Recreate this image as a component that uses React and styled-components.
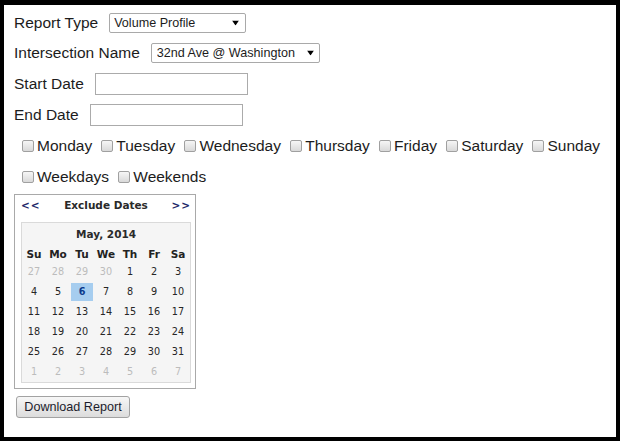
import React from 'react';
import styled, { createGlobalStyle } from 'styled-components';

const Global = createGlobalStyle`
  html, body { margin: 0; padding: 0; background: #fff; }
  body { font-family: "Liberation Sans", Arial, sans-serif; }
`;

const Frame = styled.div`
  width: 620px;
  height: 441px;
  box-sizing: border-box;
  border-style: solid;
  border-color: #000;
  border-width: 5px 4px 4px 4px;
  padding: 3px 0 0 10px;
  display: flex;
  flex-direction: column;
  align-items: flex-start;
  color: #1c1c1c;
  font-size: 15.5px;
`;

const FormRow = styled.div`
  display: flex;
  align-items: center;
  gap: 11px;
  height: ${(p) => p.$h}px;
`;

const SelectWrap = styled.span`
  position: relative;
  display: inline-flex;
`;

const Select = styled.select`
  appearance: none;
  -webkit-appearance: none;
  box-sizing: border-box;
  width: ${(p) => p.$w}px;
  height: 20px;
  margin: 0;
  padding: 0 0 0 ${(p) => p.$pl}px;
  border: 1px solid #a9a9a9;
  border-radius: 2px;
  background: #fff;
  font-family: "Liberation Sans", Arial, sans-serif;
  font-size: 12.6px;
  color: #1c1c1c;
  outline: none;
`;

const Arrow = styled.svg`
  position: absolute;
  right: ${(p) => p.$r}px;
  top: 50%;
  transform: translateY(-50%);
  pointer-events: none;
`;

const TextInput = styled.input`
  box-sizing: border-box;
  width: 153px;
  height: 22px;
  margin: 0;
  padding: 0 3px;
  border: 1px solid #ababab;
  background: #fff;
  outline: none;
`;

const CheckRow = styled.div`
  display: flex;
  align-items: center;
  gap: 9.2px;
  padding-left: 8px;
  height: 31px;
`;

const CheckItem = styled.label`
  display: inline-flex;
  align-items: center;
  white-space: nowrap;
`;

const Check = styled.input`
  appearance: none;
  -webkit-appearance: none;
  box-sizing: border-box;
  width: 12px;
  height: 12px;
  margin: 0 3px 0 0;
  border: 1px solid #a0a0a0;
  border-radius: 2px;
  background: linear-gradient(#f6f6f6, #d9d9d9);
`;

const Calendar = styled.div`
  margin-top: 2px;
  width: 182px;
  box-sizing: border-box;
  border: 1px solid #a9a9a9;
  padding: 0 4px 5px 6px;
  font-family: "DejaVu Sans", Verdana, sans-serif;
`;

const CalHeader = styled.div`
  display: flex;
  justify-content: space-between;
  align-items: center;
  height: 19px;
  margin-bottom: 8px;
  font-size: 10.5px;
  font-weight: bold;
  color: #2a2a2a;
`;

const NavLink = styled.span`
  color: #1f2a6a;
  letter-spacing: 1px;
`;

const Month = styled.div`
  box-sizing: border-box;
  width: 170px;
  border: 1px solid #dadada;
  background: #f5f5f5;
`;

const MonthTitle = styled.div`
  height: 21px;
  line-height: 22px;
  text-align: center;
  font-size: 10.5px;
  font-weight: bold;
  color: #2a2a2a;
`;

const Grid = styled.div`
  display: grid;
  grid-template-columns: repeat(7, 24px);
`;

const DayHead = styled.div`
  height: 18px;
  line-height: 20px;
  text-align: center;
  font-size: 10.5px;
  font-weight: bold;
  color: #222;
`;

const Day = styled.div`
  margin: 1px 1px 1px 1px;
  width: 22px;
  height: 18px;
  line-height: 18px;
  text-align: center;
  font-size: 9.7px;
  font-weight: ${(p) => (p.$sel ? 'bold' : 'normal')};
  color: ${(p) => (p.$sel ? '#0c3a8c' : p.$other ? '#bcbcbc' : '#262626')};
  background: ${(p) => (p.$sel ? '#a6cdef' : 'transparent')};
`;

const Button = styled.button`
  margin: 7px 0 0 2px;
  width: 114px;
  height: 22px;
  box-sizing: border-box;
  padding: 0;
  border: 1px solid #a2a2a2;
  border-radius: 3px;
  background: linear-gradient(#f7f7f7, #dcdcdc);
  font-family: "Liberation Sans", Arial, sans-serif;
  font-size: 12.6px;
  color: #1c1c2c;
`;

const DownArrow = ({ r }) => (
  <Arrow $r={r} width="7" height="5" viewBox="0 0 7 5">
    <polygon points="0,0 7,0 3.5,5" fill="#000" />
  </Arrow>
);

const days = ['Monday', 'Tuesday', 'Wednesday', 'Thursday', 'Friday', 'Saturday', 'Sunday'];
const heads = ['Su', 'Mo', 'Tu', 'We', 'Th', 'Fr', 'Sa'];

const cells = [];
[27, 28, 29, 30].forEach((d) => cells.push({ d, other: true }));
for (let d = 1; d <= 31; d++) cells.push({ d, other: false, sel: d === 6 });
for (let d = 1; d <= 7; d++) cells.push({ d, other: true });

export default function App() {
  return (
    <>
      <Global />
      <Frame>
        <FormRow $h={30}>
          <span>Report Type</span>
          <SelectWrap>
            <Select $w={137} $pl={4} defaultValue="vp">
              <option value="vp">Volume Profile</option>
            </Select>
            <DownArrow r={7} />
          </SelectWrap>
        </FormRow>
        <FormRow $h={30}>
          <span>Intersection Name</span>
          <SelectWrap>
            <Select $w={169} $pl={5} defaultValue="w">
              <option value="w">32nd Ave @ Washington</option>
            </Select>
            <DownArrow r={6} />
          </SelectWrap>
        </FormRow>
        <FormRow $h={31}>
          <span>Start Date</span>
          <TextInput type="text" />
        </FormRow>
        <FormRow $h={31}>
          <span>End Date</span>
          <TextInput type="text" />
        </FormRow>
        <CheckRow>
          {days.map((d) => (
            <CheckItem key={d}>
              <Check type="checkbox" />
              {d}
            </CheckItem>
          ))}
        </CheckRow>
        <CheckRow>
          <CheckItem>
            <Check type="checkbox" />
            Weekdays
          </CheckItem>
          <CheckItem>
            <Check type="checkbox" />
            Weekends
          </CheckItem>
        </CheckRow>
        <Calendar>
          <CalHeader>
            <NavLink>&lt;&lt;</NavLink>
            <span>Exclude Dates</span>
            <NavLink>&gt;&gt;</NavLink>
          </CalHeader>
          <Month>
            <MonthTitle>May, 2014</MonthTitle>
            <Grid>
              {heads.map((h) => (
                <DayHead key={h}>{h}</DayHead>
              ))}
              {cells.map((c, i) => (
                <Day key={i} $other={c.other} $sel={c.sel}>
                  {c.d}
                </Day>
              ))}
            </Grid>
          </Month>
        </Calendar>
        <Button>Download Report</Button>
      </Frame>
    </>
  );
}
